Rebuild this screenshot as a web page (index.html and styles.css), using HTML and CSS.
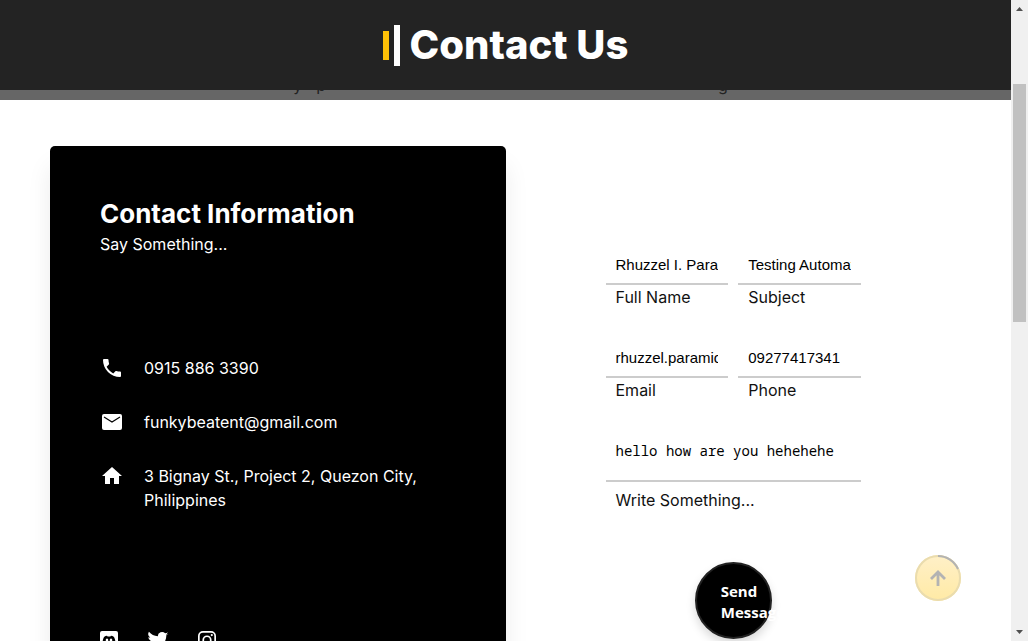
FILE: index.html
```html
<!DOCTYPE html>
<html lang="en">
<head>
<meta charset="utf-8">
<meta name="viewport" content="width=device-width, initial-scale=1">
<title>Contact Us</title>
<link rel="stylesheet" href="styles.css">
</head>
<body>
<div class="viewport">
  <div class="page">
    <header class="header">
      <span class="mark mark-short"></span>
      <span class="mark mark-tall"></span>
      <h1 class="title">Contact Us</h1>
    </header>
    <div class="banner" aria-hidden="true"><div class="banner-line"><span>y</span><span>p</span><span class="banner-end">g</span></div></div>
    <main class="contact">
      <section class="card">
        <div>
          <h2 class="card-title">Contact Information</h2>
          <p class="card-text">Say Something...</p>
        </div>
        <ul class="info">
          <li><svg class="icon" viewBox="0 0 24 24"><path d="M6.620 10.790c1.440 2.830 3.760 5.150 6.590 6.590l2.200-2.200c.28-.28.67-.36 1.020-.25 1.120.37 2.320.57 3.570.57a1 1 0 0 1 1 1V20a1 1 0 0 1-1 1A17 17 0 0 1 3 4a1 1 0 0 1 1-1h3.500a1 1 0 0 1 1 1c0 1.250.2 2.450.57 3.570.11.35.03.74-.25 1.020z"/></svg><span>0915 886 3390</span></li>
          <li><svg class="icon" viewBox="0 0 24 24"><path d="M4 4h16a2 2 0 0 1 2 2v12a2 2 0 0 1-2 2H4a2 2 0 0 1-2-2V6a2 2 0 0 1 2-2z"/><path d="m4 7 8 5 8-5" fill="none" stroke="#000" stroke-width="1.200"/></svg><span>funkybeatent@gmail.com</span></li>
          <li><svg class="icon" viewBox="0 0 24 24"><path d="M10 20v-6h4v6h5v-8h3L12 3 2 12h3v8z"/></svg><span>3 Bignay St., Project 2, Quezon City, Philippines</span></li>
        </ul>
        <div class="social">
          <a href="#discord" aria-label="Discord"><svg class="icon" viewBox="0 0 24 24"><path fill-rule="evenodd" d="M5 3h14a2 2 0 0 1 2 2v17l-4-3H5a2 2 0 0 1-2-2V5a2 2 0 0 1 2-2zm2 6c-1 2-1.500 4-1.500 6 1 1 2 1.300 3 1.300l.8-1h5.400l.8 1c1 0 2-.3 3-1.300 0-2-.5-4-1.500-6-1-.8-2-1.200-3-1.200l-.6.8h-2.800L10 7.800C9 7.800 8 8.200 7 9zm3 1.500a1.300 1.500 0 1 1 0 3 1.300 1.500 0 0 1 0-3zm4 0a1.300 1.500 0 1 1 0 3 1.300 1.500 0 0 1 0-3z"/></svg></a>
          <a href="#twitter" aria-label="Twitter"><svg class="icon" viewBox="0 0 24 24"><path d="M22.460 6c-.77.35-1.600.58-2.460.69.88-.53 1.560-1.370 1.880-2.380-.83.5-1.750.85-2.720 1.050A4.280 4.280 0 0 0 11.780 8.290a12.140 12.140 0 0 1-8.840-4.480 4.280 4.280 0 0 0 1.340 5.730 4.250 4.250 0 0 1-1.940-.54v.05a4.290 4.290 0 0 0 3.440 4.200 4.300 4.300 0 0 1-1.930.07 4.290 4.290 0 0 0 4 2.980A8.600 8.600 0 0 1 1.560 18 12.120 12.120 0 0 0 8.120 20c7.880 0 12.200-6.540 12.200-12.210 0-.19 0-.37-.02-.56A8.700 8.700 0 0 0 22.460 6z"/></svg></a>
          <a href="#instagram" aria-label="Instagram"><svg class="icon" viewBox="0 0 24 24"><path fill-rule="evenodd" d="M8 3h8a5 5 0 0 1 5 5v8a5 5 0 0 1-5 5H8a5 5 0 0 1-5-5V8a5 5 0 0 1 5-5zm0 1.700A3.300 3.300 0 0 0 4.700 8v8A3.300 3.300 0 0 0 8 19.300h8a3.300 3.300 0 0 0 3.300-3.300V8A3.300 3.300 0 0 0 16 4.700zm4 2.700a4.600 4.600 0 1 1 0 9.200 4.600 4.600 0 0 1 0-9.200zm0 1.700a2.900 2.900 0 1 0 0 5.800 2.900 2.900 0 0 0 0-5.800zM16.800 6a1.100 1.100 0 1 1 0 2.200 1.100 1.100 0 0 1 0-2.200z"/></svg></a>
        </div>
      </section>
      <form class="form">
        <div class="field"><input id="name" type="text" value="Rhuzzel I. Paramio"><label for="name">Full Name</label></div>
        <div class="field"><input id="subject" type="text" value="Testing Automation"><label for="subject">Subject</label></div>
        <div class="field"><input id="email" type="text" value="rhuzzel.paramio@gmail.com"><label for="email">Email</label></div>
        <div class="field"><input id="phone" type="tel" value="09277417341"><label for="phone">Phone</label></div>
        <div class="field wide"><textarea id="message">hello how are you hehehehe</textarea><label for="message">Write Something...</label></div>
        <button class="send" type="button">Send Message</button>
      </form>
    </main>
    <button class="to-top" type="button" aria-label="Back to top">
      <svg viewBox="0 0 46 46"><defs><linearGradient id="gold" x1="0" y1="0" x2="0" y2="1"><stop offset="0" stop-color="#fff0c8"/><stop offset="1" stop-color="#ffeaa5"/></linearGradient></defs><circle cx="23" cy="23" r="23" fill="url(#gold)"/><circle cx="23" cy="23" r="22" fill="none" stroke="#eadcae" stroke-width="2"/><path d="M23 1a22 22 0 0 1 20 13" fill="none" stroke="#b3b3b3" stroke-width="2"/><path d="M23 31V17M16 24l7-7 7 7" fill="none" stroke="#b3b3b3" stroke-width="2.800"/></svg>
    </button>
  </div>
  <div class="scrollbar" aria-hidden="true">
    <svg class="arrow" viewBox="0 0 17 17"><path d="M5 11h7L8.500 7z"/></svg>
    <div class="track"><div class="thumb"></div></div>
    <svg class="arrow" viewBox="0 0 17 17"><path d="M5 6h7l-3.500 4z"/></svg>
  </div>
</div>
</body>
</html>
```
FILE: styles.css
```css
* { box-sizing: border-box; margin: 0; padding: 0; }

body {
  font-family: Inter, "Open Sans", sans-serif;
  font-size: 16px;
  line-height: 24px;
  background: #fff;
  color: #111;
}

.viewport {
  display: flex;
  height: 100vh;
  overflow: hidden;
}

.page {
  position: relative;
  flex: 1;
  min-width: 0;
  overflow: hidden;
}

.header {
  display: flex;
  align-items: center;
  justify-content: center;
  gap: 5px;
  height: 90px;
  background: #232323;
  color: #fff;
}

.mark { width: 6px; }
.mark-short { height: 29px; background: #ffc107; }
.mark-tall { height: 41px; background: #fff; }

.title {
  margin-left: 5px;
  font-size: 40px;
  line-height: 48px;
  font-weight: 800;
}

.banner {
  display: flex;
  align-items: flex-end;
  height: 10px;
  padding: 0 28% 0 29%;
  overflow: hidden;
  background: #666;
  color: #222;
}

.banner-line {
  display: flex;
  flex: 1;
  gap: 14px;
  line-height: 30px;
}
.banner-end { margin-left: auto; }

.contact {
  display: grid;
  grid-template-columns: 1fr 1fr;
  padding: 46px 50px;
}

.card {
  display: flex;
  flex-direction: column;
  gap: 100px;
  padding: 50px;
  border-radius: 5px;
  background: #000;
  color: #fff;
  box-shadow: 0 20px 25px rgba(0, 0, 0, 0.08);
}

.card-title { font-size: 26px; line-height: 36px; font-weight: 700; }

.info {
  display: flex;
  flex-direction: column;
  gap: 30px;
  list-style: none;
}

.info li { display: flex; gap: 20px; }

.icon {
  display: block;
  flex: none;
  width: 24px;
  height: 24px;
  fill: currentColor;
}

.social { display: flex; gap: 25px; margin: 16px 0 0 -3px; }
.social a { color: inherit; }

.form {
  display: grid;
  grid-template-columns: 1fr 1fr;
  align-content: start;
  column-gap: 10px;
  row-gap: 30px;
  padding: 100px;
}

.field { display: flex; flex-direction: column; min-width: 0; }
.wide { grid-column: 1 / -1; }

.field input,
.field textarea {
  width: 100%;
  padding: 10px;
  border: 0;
  border-bottom: 2px solid #ccc;
  outline: 0;
  background: transparent;
  color: #000;
  resize: none;
}

.field input {
  height: 39px;
  font: 15px "Liberation Sans", Arial, sans-serif;
}

.field textarea {
  height: 50px;
  margin-bottom: 6px;
  overflow: hidden;
  font: 14px/18px "Noto Sans Mono", "DejaVu Sans Mono", monospace;
}

.field label { padding-left: 10px; }

.send {
  grid-column: 1 / -1;
  justify-self: center;
  width: 77px;
  height: 77px;
  margin-top: 20px;
  padding: 2px 24px 0;
  border: 2px solid #222;
  border-radius: 50%;
  background: #000;
  color: #fff;
  font: 700 15px/21px "Open Sans", sans-serif;
  text-align: left;
  box-shadow: 0 5px 10px rgba(0, 0, 0, 0.15);
}

.to-top {
  position: absolute;
  right: 50px;
  bottom: 40px;
  width: 46px;
  height: 46px;
  border: 0;
  border-radius: 50%;
  background: none;
}

.to-top svg { display: block; }

.scrollbar {
  display: flex;
  flex-direction: column;
  width: 17px;
  background: #f0f0f0;
}

.arrow { width: 17px; height: 17px; fill: #505050; }
.track { flex: 1; padding: 67px 2px 0; }
.thumb { height: 44%; min-height: 20px; background: #c1c1c1; }
```
